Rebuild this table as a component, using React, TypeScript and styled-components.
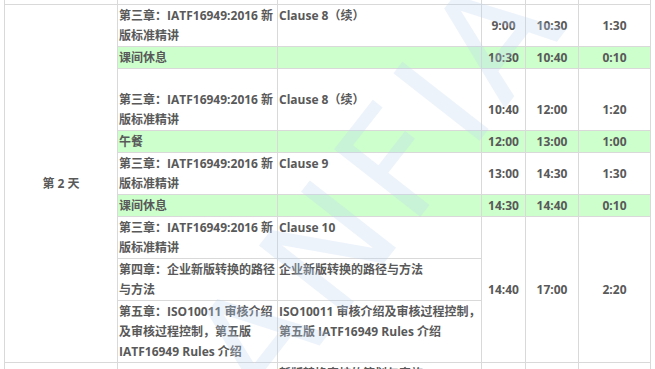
import * as React from "react";
import styled, { createGlobalStyle } from "styled-components";

const GlobalStyle = createGlobalStyle`
  html, body {
    margin: 0;
    padding: 0;
    background: #ffffff;
  }
`;

type Slot = {
  chapter: string[];
  topic: string[];
  rest?: boolean;
  lead?: boolean;
  start?: string;
  end?: string;
  hours?: string;
  span?: number;
};

const slots: Slot[] = [
  {
    chapter: ["第三章：IATF16949:2016 新", "版标准精讲"],
    topic: ["Clause 8（续）"],
    start: "9:00",
    end: "10:30",
    hours: "1:30",
  },
  { chapter: ["课间休息"], topic: [], rest: true, start: "10:30", end: "10:40", hours: "0:10" },
  {
    chapter: ["第三章：IATF16949:2016 新", "版标准精讲"],
    topic: ["Clause 8（续）"],
    lead: true,
    start: "10:40",
    end: "12:00",
    hours: "1:20",
  },
  { chapter: ["午餐"], topic: [], rest: true, start: "12:00", end: "13:00", hours: "1:00" },
  {
    chapter: ["第三章：IATF16949:2016 新", "版标准精讲"],
    topic: ["Clause 9"],
    start: "13:00",
    end: "14:30",
    hours: "1:30",
  },
  { chapter: ["课间休息"], topic: [], rest: true, start: "14:30", end: "14:40", hours: "0:10" },
  {
    chapter: ["第三章：IATF16949:2016 新", "版标准精讲"],
    topic: ["Clause 10"],
    start: "14:40",
    end: "17:00",
    hours: "2:20",
    span: 3,
  },
  {
    chapter: ["第四章：企业新版转换的路径", "与方法"],
    topic: ["企业新版转换的路径与方法"],
  },
  {
    chapter: ["第五章：ISO10011 审核介绍", "及审核过程控制，第五版", "IATF16949 Rules 介绍"],
    topic: ["ISO10011 审核介绍及审核过程控制，", "第五版 IATF16949 Rules 介绍"],
  },
];

export default function App() {
  return (
    <>
      <GlobalStyle />
      <Viewport>
        <Schedule>
          <colgroup>
            <col style={{ width: 113 }} />
            <col style={{ width: 160 }} />
            <col style={{ width: 204 }} />
            <col style={{ width: 44 }} />
            <col style={{ width: 53 }} />
            <col style={{ width: 72 }} />
          </colgroup>
          <tbody>
            <Row>
              <DayCell />
              <TextCell />
              <TextCell />
              <TimeCell />
              <TimeCell />
              <TimeCell />
            </Row>
            {slots.map((slot, i) => (
              <Row key={i} $rest={slot.rest}>
                {i === 0 && <DayCell rowSpan={slots.length}>第 2 天</DayCell>}
                <TextCell $lead={slot.lead}>
                  {slot.chapter.map((line) => (
                    <Line key={line}>{line}</Line>
                  ))}
                </TextCell>
                <TextCell $lead={slot.lead}>
                  {slot.topic.map((line) => (
                    <Line key={line}>{line}</Line>
                  ))}
                </TextCell>
                {slot.start && (
                  <>
                    <TimeCell rowSpan={slot.span} $lead={slot.lead}>
                      {slot.start}
                    </TimeCell>
                    <TimeCell rowSpan={slot.span} $lead={slot.lead}>
                      {slot.end}
                    </TimeCell>
                    <TimeCell rowSpan={slot.span} $lead={slot.lead}>
                      {slot.hours}
                    </TimeCell>
                  </>
                )}
              </Row>
            ))}
            <Row>
              <DayCell />
              <TextCell />
              <TextCell>
                <Line>新版转换审核的策划与实施</Line>
              </TextCell>
              <TimeCell />
              <TimeCell />
              <TimeCell />
            </Row>
          </tbody>
        </Schedule>
        <Watermark aria-hidden="true">ANFIA</Watermark>
      </Viewport>
    </>
  );
}

const Viewport = styled.div`
  position: relative;
  height: 369px;
  overflow: hidden;
  padding-left: 4px;
`;

const Schedule = styled.table`
  border-collapse: collapse;
  table-layout: fixed;
  width: 647px;
  margin-top: -18px;
  font-family: "Open Sans", "Noto Sans CJK SC", sans-serif;
  font-size: 12px;
  font-weight: 700;
  line-height: 20px;
  color: #595959;
`;

const Watermark = styled.div`
  position: absolute;
  left: 130px;
  top: 110px;
  font-family: "DejaVu Sans", sans-serif;
  font-size: 150px;
  font-weight: 400;
  letter-spacing: 10px;
  line-height: 1;
  color: rgba(190, 212, 242, 0.28);
  transform: rotate(-52deg);
  transform-origin: center;
  pointer-events: none;
  white-space: nowrap;
`;

const Row = styled.tr<{ $rest?: boolean }>`
  background: ${({ $rest }) => ($rest ? "#ccffcc" : "transparent")};
`;

const Cell = styled.td`
  border: 1px solid #d9d9d9;
  padding: 1px 1px 0;
  height: 20px;
`;

const DayCell = styled(Cell)`
  background: #ffffff;
  text-align: center;
  vertical-align: middle;
`;

const TextCell = styled(Cell)<{ $lead?: boolean }>`
  vertical-align: top;
  padding-top: ${({ $lead }) => ($lead ? "21px" : "1px")};
`;

const TimeCell = styled(Cell)<{ $lead?: boolean }>`
  text-align: center;
  vertical-align: middle;
  padding-top: ${({ $lead }) => ($lead ? "21px" : "1px")};
`;

const Line = styled.div`
  white-space: nowrap;
`;
